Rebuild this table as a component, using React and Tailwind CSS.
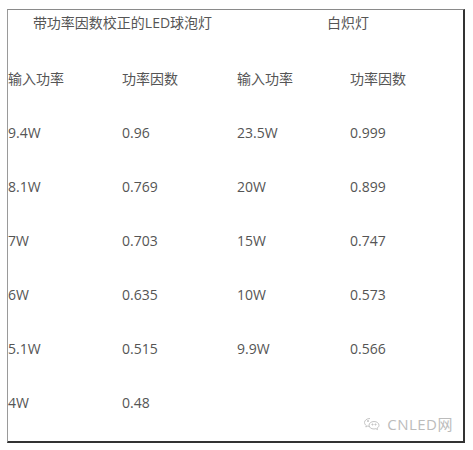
import React from 'react';

const rows = [
  ['9.4W', '0.96', '23.5W', '0.999'],
  ['8.1W', '0.769', '20W', '0.899'],
  ['7W', '0.703', '15W', '0.747'],
  ['6W', '0.635', '10W', '0.573'],
  ['5.1W', '0.515', '9.9W', '0.566'],
  ['4W', '0.48', '', ''],
];

const font = { fontFamily: '"Open Sans", "Noto Sans CJK SC", sans-serif' };

const App = () => {
  return (
    <div className="w-[473px] h-[450px] bg-white relative" style={font}>
      <div className="absolute left-[7px] top-[9px] w-[458px] h-[434px] border-l border-t border-l-[#9a9a9a] border-t-[#8a8a8a] border-r-2 border-b-2 border-r-[#333] border-b-[#333] text-[14px] text-[#555]">
        {/* title row */}
        <div className="grid grid-cols-[229px_1fr] h-[25px] items-center">
          <div className="text-center">带功率因数校正的LED球泡灯</div>
          <div className="text-center pr-[4px]">白炽灯</div>
        </div>
        {/* header */}
        <div className="grid grid-cols-[114px_115px_113px_1fr] h-[54px] items-center mt-[16px]">
          <div>输入功率</div>
          <div>功率因数</div>
          <div>输入功率</div>
          <div>功率因数</div>
        </div>
        {rows.map((r, i) => (
          <div key={i} className="grid grid-cols-[114px_115px_113px_1fr] h-[54px] items-center">
            {r.map((c, j) => (
              <div key={j}>{c}</div>
            ))}
          </div>
        ))}
        {/* watermark */}
        <div className="absolute right-[10px] bottom-[6px] flex items-center gap-[6px] text-[#bcbcbc] text-[15px]">
          <svg width="18" height="15" viewBox="0 0 18 15" fill="none" stroke="#c4c4c4" strokeWidth="1">
            <path d="M7 2.5 C3.5 2.5 1.5 4.5 1.5 6.5 C1.5 7.8 2.2 8.8 3.3 9.5 L2.8 11 L4.6 10.1 C5.3 10.3 6 10.4 7 10.4" />
            <path d="M11 5.5 C8 5.5 6 7.3 6 9.3 C6 11.3 8 13 11 13 C11.7 13 12.3 12.9 12.9 12.7 L14.5 13.6 L14.1 12.1 C15.3 11.4 16 10.4 16 9.3 C16 7.3 14 5.5 11 5.5 Z" />
            <circle cx="5" cy="5" r="0.6" fill="#c4c4c4" />
            <circle cx="9.5" cy="8.5" r="0.6" fill="#c4c4c4" />
            <circle cx="12.5" cy="8.5" r="0.6" fill="#c4c4c4" />
          </svg>
          <span className="tracking-[0.5px]">CNLED网</span>
        </div>
      </div>
    </div>
  );
};

export default App;
